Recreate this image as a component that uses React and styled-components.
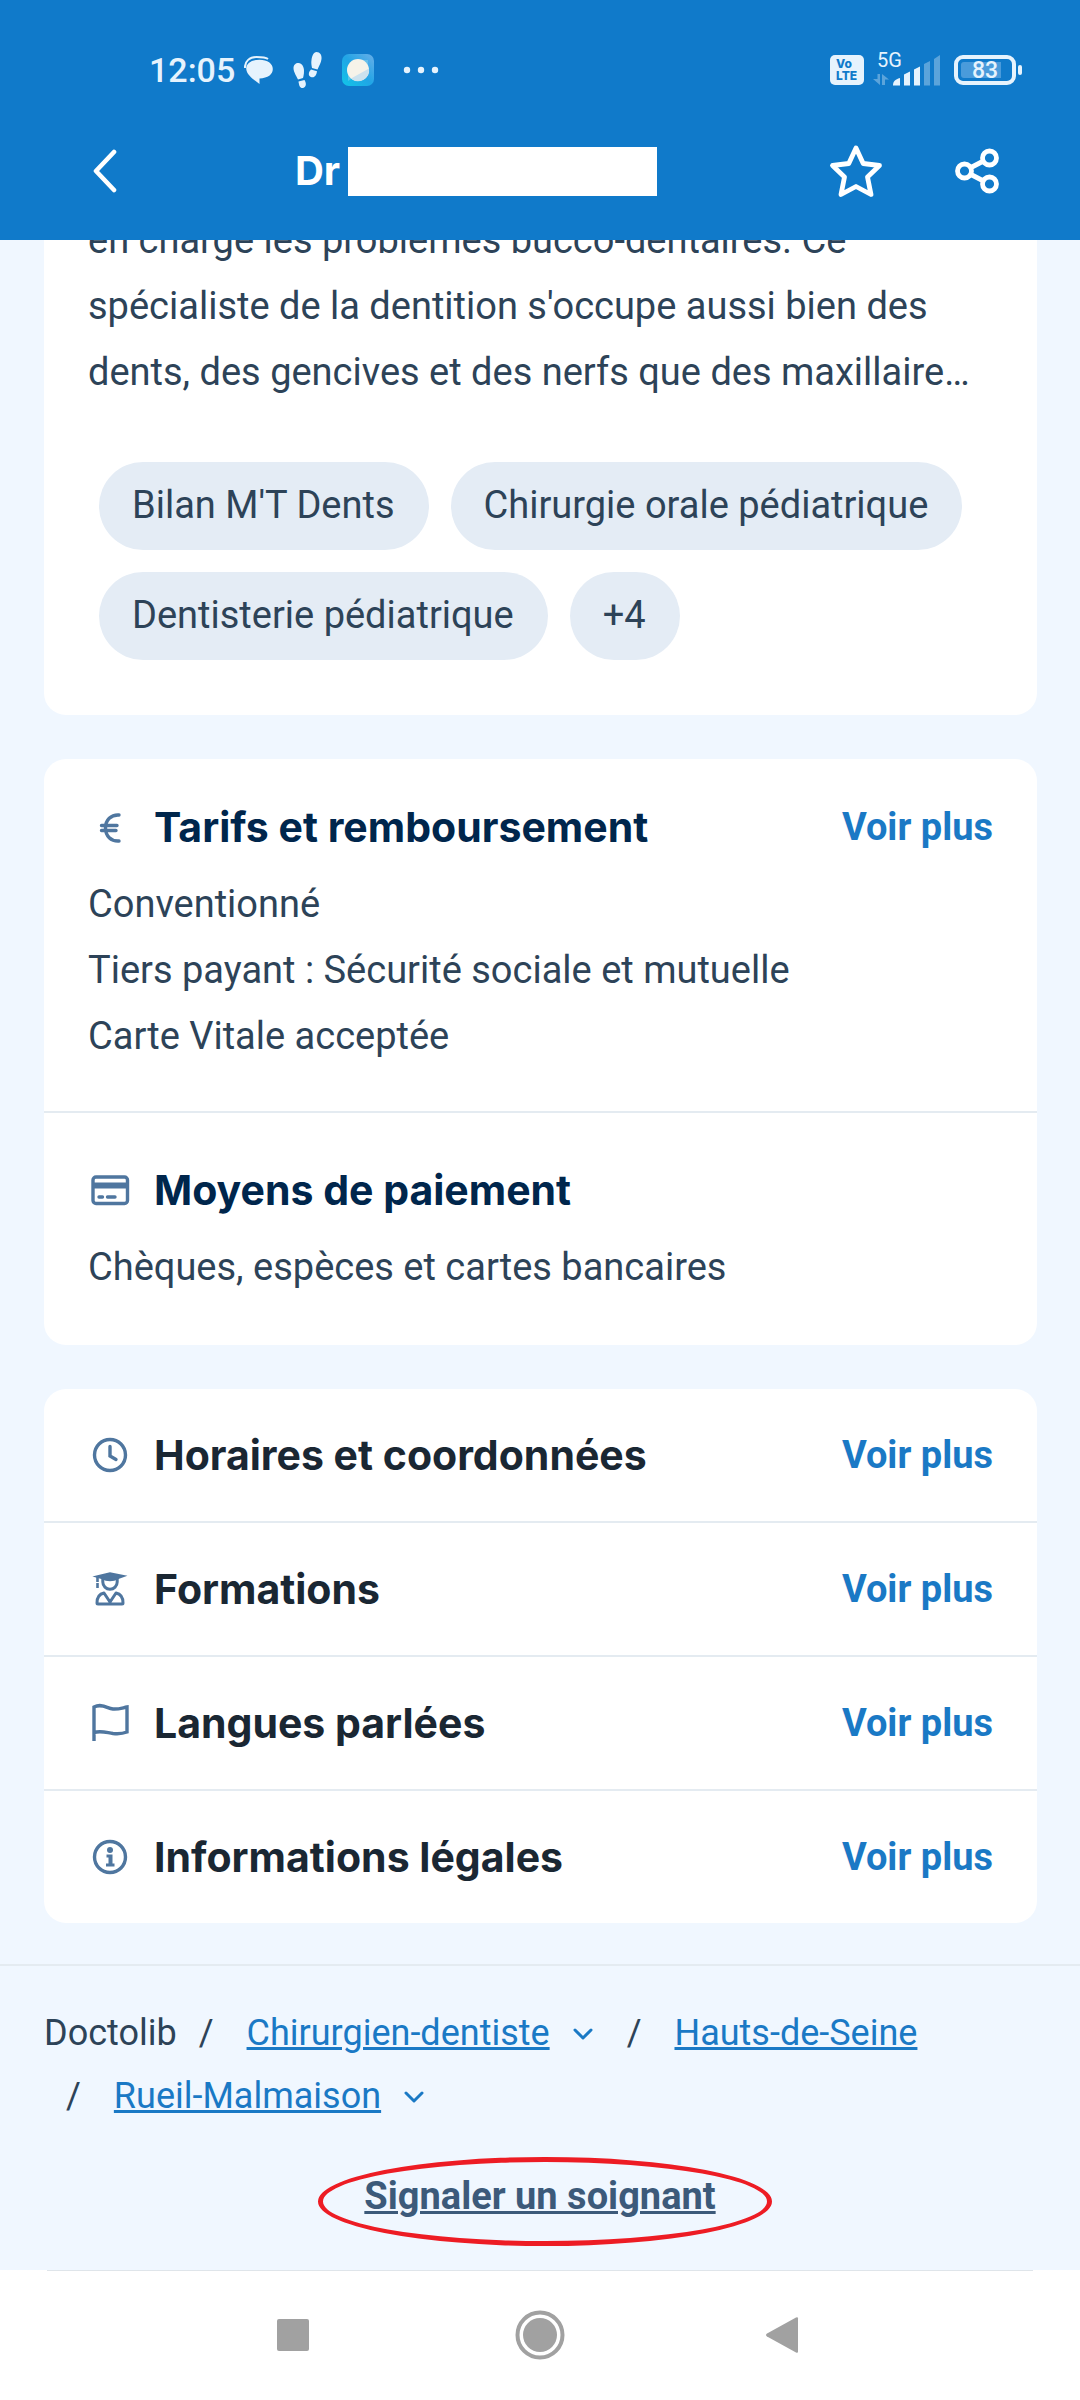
import React from "react";
import styled, { createGlobalStyle, ThemeProvider } from "styled-components";

const theme = {
  Colors: {
    Primary: "#107aca",
    White: "#ffffff",
    Page: "#f0f7ff",
    Status: "#e6f3fd",
    Text: "#2d4358",
    Navy: "#00264c",
    Dark: "#1a2733",
    Link: "#1a79c5",
    Icon: "#4f769f",
    Chip: "#e4ecf5",
    Line: "#e4ebf1",
    Report: "#3c5a7a",
    Mark: "#ed1c24",
    System: "#a1a1a1",
  },
  Fonts: {
    Body: `Roboto, "Liberation Sans", sans-serif`,
    Title: `Inter, "Open Sans", sans-serif`,
  },
};

const GlobalStyle = createGlobalStyle`
  * {
    box-sizing: border-box;
  }

  body {
    margin: 0;
    background: ${theme.Colors.Page};
    color: ${theme.Colors.Text};
    font-family: ${theme.Fonts.Body};
    font-size: 38px;
    line-height: 66px;
  }
`;

const Header = styled.header`
  position: sticky;
  top: 0;
  z-index: 1;
  background: ${(props) => props.theme.Colors.Primary};
  color: ${(props) => props.theme.Colors.White};
`;

const StatusBar = styled.div`
  display: flex;
  justify-content: space-between;
  height: 102px;
  padding: 38px 58px 0 149px;
  color: ${(props) => props.theme.Colors.Status};
`;

const StatusGroup = styled.div`
  display: flex;
  align-items: center;
  gap: ${(props) => props.$gap}px;
`;

const Clock = styled.time`
  font-size: 34px;
  font-weight: 500;
  line-height: 40px;
`;

const NoticeIcons = styled.div`
  display: flex;
  align-items: center;
  gap: 19px;
`;

const VoLte = styled.span`
  display: flex;
  flex-direction: column;
  justify-content: center;
  width: 34px;
  height: 30px;
  padding-left: 6px;
  border-radius: 5px;
  background: ${(props) => props.theme.Colors.Status};
  color: ${(props) => props.theme.Colors.Primary};
  font-family: ${(props) => props.theme.Fonts.Title};
  font-size: 12px;
  font-weight: 800;
  line-height: 12px;
`;

const Battery = styled.span`
  display: flex;
  align-items: center;
  gap: 2px;

  &::after {
    content: "";
    width: 4px;
    height: 10px;
    border-radius: 2px;
    background: ${(props) => props.theme.Colors.Status};
  }
`;

const BatteryBody = styled.span`
  width: 62px;
  height: 30px;
  padding: 3px;
  border: 4px solid ${(props) => props.theme.Colors.Status};
  border-radius: 9px;
`;

const BatteryLevel = styled.span`
  display: block;
  height: 16px;
  border-radius: 3px;
  background: linear-gradient(to right, #4a9bdb 83%, transparent 83%);
  font-size: 23px;
  font-weight: 500;
  line-height: 17px;
  text-align: center;
`;

const AppBar = styled.div`
  display: flex;
  align-items: center;
  height: 138px;
  padding: 0 67px 0 78px;
`;

const IconButton = styled.button`
  display: flex;
  justify-content: center;
  align-items: center;
  width: ${(props) => props.$width}px;
  height: 72px;
  padding: 0;
  border: 0;
  background: none;
  color: inherit;
`;

const AppTitle = styled.h1`
  flex: 1;
  display: flex;
  justify-content: center;
  align-items: center;
  gap: 8px;
  margin: 0;
  font-family: ${(props) => props.theme.Fonts.Title};
  font-size: 40px;
  font-weight: 700;
  line-height: 48px;
`;

const HiddenName = styled.span`
  width: 309px;
  height: 49px;
  background: ${(props) => props.theme.Colors.White};
`;

const AppActions = styled.div`
  display: flex;
  gap: 49px;
`;

const Cards = styled.main`
  display: flex;
  flex-direction: column;
  gap: 44px;
  margin-top: -33px;
  padding: 0 43px 41px 44px;
`;

const Card = styled.section`
  border-radius: 22px;
  background: ${(props) => props.theme.Colors.White};
`;

const About = styled(Card)`
  padding: 0 44px 55px;
`;

const AboutText = styled.p`
  margin: 0 0 57px;
`;

const Chips = styled.ul`
  display: flex;
  flex-wrap: wrap;
  gap: 22px;
  margin: 0;
  padding: 0 11px;
  list-style: none;
`;

const Chip = styled.li`
  padding: 10px 34px 12px 33px;
  border-radius: 44px;
  background: ${(props) => props.theme.Colors.Chip};
`;

const Section = styled.div`
  padding: ${(props) => (props.$divided ? "53px 44px 45px" : "44px 44px 42px")};
  border-top: ${(props) => (props.$divided ? `2px solid ${props.theme.Colors.Line}` : "0")};
`;

const HeadingRow = styled.div`
  display: flex;
  align-items: center;
  gap: 22px;
  height: 48px;
`;

const MenuRow = styled(HeadingRow)`
  height: 132px;
  padding: 0 44px;

  & + & {
    height: 134px;
    border-top: 2px solid ${(props) => props.theme.Colors.Line};
  }
`;

const Heading = styled.h2`
  flex: 1;
  margin: 0;
  color: ${(props) => props.theme.Colors[props.$color]};
  font-family: ${(props) => props.theme.Fonts.Title};
  font-size: 41px;
  font-weight: 700;
  line-height: 48px;
`;

const MoreLink = styled.a`
  color: ${(props) => props.theme.Colors.Link};
  font-weight: 700;
  line-height: 48px;
  text-decoration: none;
`;

const Lines = styled.div`
  margin-top: 20px;
`;

const Line = styled.p`
  margin: 0;
`;

const RowIcon = styled.svg`
  flex: none;
  width: 44px;
  height: 44px;
  fill: none;
  stroke: ${(props) => props.theme.Colors.Icon};
  stroke-width: 3.4;
`;

const Footer = styled.footer`
  display: flex;
  flex-direction: column;
  padding: 36px 44px 41px;
  border-top: 2px solid ${(props) => props.theme.Colors.Line};
`;

const Breadcrumb = styled.ol`
  display: flex;
  flex-wrap: wrap;
  margin: 0 0 35px;
  padding: 0;
  list-style: none;
  font-size: 36px;
  line-height: 63px;
`;

const Crumb = styled.li`
  display: flex;
  align-items: center;

  & + &::before {
    content: "/";
    padding: 0 33px 0 22px;
  }
`;

const CrumbLink = styled.a`
  color: ${(props) => props.theme.Colors.Link};
  text-decoration: underline;
  text-decoration-thickness: 3px;
`;

const CrumbArrow = styled.svg`
  width: 20px;
  height: 12px;
  margin: 0 12px 0 23px;
  fill: none;
  stroke: ${(props) => props.theme.Colors.Link};
  stroke-width: 3;
`;

const Report = styled.div`
  position: relative;
  align-self: center;
`;

const ReportLink = styled.a`
  color: ${(props) => props.theme.Colors.Report};
  font-weight: 700;
  text-decoration-thickness: 3px;
`;

const ReportMark = styled.span`
  position: absolute;
  inset: -6px -56px -17px -46px;
  border: 5px solid ${(props) => props.theme.Colors.Mark};
  border-radius: 50%;
  pointer-events: none;
`;

const SystemNav = styled.nav`
  display: flex;
  justify-content: center;
  align-items: center;
  gap: 193px;
  height: 130px;
  background:
    linear-gradient(#dfe5ea, #dfe5ea) top / calc(100% - 94px) 1px no-repeat,
    ${(props) => props.theme.Colors.White};
  color: ${(props) => props.theme.Colors.System};
`;

const icons = {
  euro: (
    <g strokeLinecap="round">
      <path d="M31 10c-8-.500-13.500 5-13.500 13S23 36.500 31 36" />
      <path d="M13.500 20.500H29M13.500 25.500H28" />
    </g>
  ),
  card: (
    <>
      <rect x="5" y="9" width="34.500" height="26.500" rx="3" />
      <path d="M5 17.500h34" strokeWidth="6" />
      <path d="M11 29h3.500M19.500 29H27" strokeLinecap="round" />
    </>
  ),
  clock: (
    <>
      <circle cx="22" cy="22" r="15.500" />
      <path d="M22 13.500V23l6 3.500" strokeLinecap="round" />
    </>
  ),
  graduate: (
    <>
      <path
        d="M7.500 9.500 22 6l14.500 3-7 2.500c-4 2.500-11 2.500-15 0z"
        fill="currentColor"
        strokeWidth="1.600"
      />
      <path d="M14.800 11v4a7.200 7.200 0 0 0 14.400 0v-4" strokeWidth="3" />
      <path d="M9.500 10v11" strokeWidth="2.600" strokeDasharray="5 1 5" />
      <path
        d="M22 35 16 26c-5 1-7 5-7 10 0 .700.300 1 1 1h24c.700 0 1-.300 1-1 0-5-2-9-7-10z"
        strokeWidth="3"
        strokeLinejoin="round"
      />
    </>
  ),
  flag: (
    <path d="M6 40V6c8-4 13 1.500 19 2 5 .500 9-1 14-2v25c-5 2-9 2-14 1.500-7-1-12-3-19-1" />
  ),
  info: (
    <>
      <circle cx="22" cy="22" r="15.500" />
      <circle cx="22" cy="15" r="3" fill="currentColor" stroke="none" />
      <path
        d="M18.500 19.500h6V28.500h2V31.500h-8.500v-3h2.500v-6h-2z"
        fill="currentColor"
        stroke="none"
      />
    </>
  ),
};

const Icon = ({ name }) => (
  <RowIcon viewBox="0 0 44 44" color={theme.Colors.Icon} aria-hidden="true">
    {icons[name]}
  </RowIcon>
);

const MessageIcon = () => (
  <svg width="30" height="30" viewBox="0 0 30 30" fill="currentColor">
    <path d="M15.500 4.700c8 0 13.300 3.800 13.300 9.300S24 23 15.500 23.500V29C11 25.500 2.200 20 2.200 13.500c0-5.200 5.300-8.800 13.300-8.800z" />
    <path
      d="M1 13C.500 6 6 2 12.500 2c5 0 9 .200 11.500 2"
      fill="none"
      stroke="currentColor"
      strokeWidth="2"
    />
  </svg>
);

const StepsIcon = () => (
  <svg width="30" height="38" viewBox="0 0 30 38" fill="currentColor">
    <path d="M5.500 12C9 12 11 16 11 20c0 3-.500 5-1 7l-5 1.500C2 23 .500 20 .500 17c0-3 2-5 5-5z" />
    <path d="M5.500 30.500 11.500 29c2 3 2 7-1.500 8-3 .500-4-2.500-4.500-6.500z" />
    <path d="M23.500 1C27 1 29 4 28.500 8c-.500 4-2 6-4 10.500L19 17c-.500-3-1-5-.500-8 .500-4 2-8 5-8z" />
    <path d="M18 18.500l6 1.700c-.500 4-2.500 6.500-5.500 6-3.500-.700-3.500-4.700-.500-7.700z" />
  </svg>
);

const WeatherIcon = () => (
  <svg width="32" height="32" viewBox="0 0 32 32">
    <defs>
      <linearGradient id="sky" x1="0" y1="1" x2="1" y2="0">
        <stop offset="0" stopColor="#12c6e8" />
        <stop offset="0.5" stopColor="#20a5e6" />
        <stop offset="1" stopColor="#69aee8" />
      </linearGradient>
    </defs>
    <rect width="32" height="32" rx="7" fill="url(#sky)" />
    <path d="M6 27V18L20 6h6v8z" fill="#7bcdef" opacity="0.6" />
    <circle cx="16" cy="16" r="11" fill="#f6f3e9" />
    <path d="M27 14.500A11 11 0 0 1 9 24.500z" fill="#cbe2ee" />
  </svg>
);

const DotsIcon = () => (
  <svg width="36" height="8" viewBox="0 0 36 8" fill="currentColor">
    <circle cx="4" cy="4" r="3.200" />
    <circle cx="18" cy="4" r="3.200" />
    <circle cx="32" cy="4" r="3.200" />
  </svg>
);

const SignalIcon = () => (
  <svg width="72" height="48" viewBox="-4 -6 72 48" fill="currentColor">
    <text x="4" y="15" fontSize="20" fontFamily="Roboto, sans-serif">
      5G
    </text>
    <path d="M20 33.500c0-4 2-6 7-7.500v7.500z" />
    <path d="M31 22.500l6-3v14h-6z" />
    <path d="M41 17.500l6-3v19h-6z" />
    <g opacity="0.35">
      <path d="M51 12l6-3v24.500h-6z" />
      <path d="M61 7l6-4v30.500h-6z" />
      <path d="M4.500 22h2.500v11L0 27h4.500zM9 22l7 5.500h-4v5.500H9z" />
    </g>
  </svg>
);

const BackIcon = () => (
  <svg width="28" height="44" viewBox="0 0 28 44" fill="none" stroke="currentColor" strokeWidth="4.600">
    <path d="M23 3 5 22l18 19" strokeLinecap="round" strokeLinejoin="round" />
  </svg>
);

const StarIcon = () => (
  <svg width="54" height="54" viewBox="0 0 54 54" fill="none" stroke="currentColor" strokeWidth="4.800">
    <path
      d="M27 4l7.200 15.500L50.500 21.500 38.500 33 42 50.500 27 42.500 12 50.500 15.500 33 3.500 21.500 19.800 19.500z"
      strokeLinejoin="round"
    />
  </svg>
);

const ShareIcon = () => (
  <svg width="46" height="46" viewBox="0 0 46 46" fill="none" stroke="currentColor" strokeWidth="4.800">
    <circle cx="10.500" cy="23" r="7" />
    <circle cx="35.500" cy="10" r="7" />
    <circle cx="35.500" cy="36" r="7" />
    <path d="M17 19.500l12.500-6.500M17 26.500l12.500 6.500" />
  </svg>
);

const chips = ["Bilan M'T Dents", "Chirurgie orale pédiatrique", "Dentisterie pédiatrique", "+4"];

const rows = [
  { icon: "clock", title: "Horaires et coordonnées" },
  { icon: "graduate", title: "Formations" },
  { icon: "flag", title: "Langues parlées" },
  { icon: "info", title: "Informations légales" },
];

const crumbs = [
  { name: "Doctolib" },
  { name: "Chirurgien-dentiste", link: "#dentiste", menu: true },
  { name: "Hauts-de-Seine", link: "#hauts-de-seine" },
  { name: "Rueil-Malmaison", link: "#rueil-malmaison", menu: true },
];

const App = () => (
  <ThemeProvider theme={theme}>
    <GlobalStyle />
    <Header>
      <StatusBar>
        <StatusGroup $gap={9}>
          <Clock>12:05</Clock>
          <NoticeIcons>
            <MessageIcon />
            <StepsIcon />
            <WeatherIcon />
          </NoticeIcons>
          <StatusGroup $gap={20}>
            <span />
            <DotsIcon />
          </StatusGroup>
        </StatusGroup>
        <StatusGroup $gap={13}>
          <StatusGroup $gap={5}>
            <VoLte>
              <span>Vo</span>
              <span>LTE</span>
            </VoLte>
            <SignalIcon />
          </StatusGroup>
          <Battery>
            <BatteryBody>
              <BatteryLevel>83</BatteryLevel>
            </BatteryBody>
          </Battery>
        </StatusGroup>
      </StatusBar>
      <AppBar>
        <IconButton $width={54} aria-label="Retour">
          <BackIcon />
        </IconButton>
        <AppTitle>
          Dr
          <HiddenName />
        </AppTitle>
        <AppActions>
          <IconButton $width={72} aria-label="Favori">
            <StarIcon />
          </IconButton>
          <IconButton $width={72} aria-label="Partager">
            <ShareIcon />
          </IconButton>
        </AppActions>
      </AppBar>
    </Header>

    <Cards>
      <About>
        <AboutText>
          en charge les problèmes bucco-dentaires. Ce spécialiste de la dentition
          s'occupe aussi bien des dents, des gencives et des nerfs que des
          maxillaire…
        </AboutText>
        <Chips>
          {chips.map((chip) => (
            <Chip key={chip}>{chip}</Chip>
          ))}
        </Chips>
      </About>

      <Card>
        <Section>
          <HeadingRow>
            <Icon name="euro" />
            <Heading $color="Navy">Tarifs et remboursement</Heading>
            <MoreLink href="#tarifs">Voir plus</MoreLink>
          </HeadingRow>
          <Lines>
            <Line>Conventionné</Line>
            <Line>Tiers payant : Sécurité sociale et mutuelle</Line>
            <Line>Carte Vitale acceptée</Line>
          </Lines>
        </Section>
        <Section $divided>
          <HeadingRow>
            <Icon name="card" />
            <Heading $color="Navy">Moyens de paiement</Heading>
          </HeadingRow>
          <Lines>
            <Line>Chèques, espèces et cartes bancaires</Line>
          </Lines>
        </Section>
      </Card>

      <Card>
        {rows.map((row) => (
          <MenuRow key={row.icon}>
            <Icon name={row.icon} />
            <Heading $color="Dark">{row.title}</Heading>
            <MoreLink href={`#${row.icon}`}>Voir plus</MoreLink>
          </MenuRow>
        ))}
      </Card>
    </Cards>

    <Footer>
      <Breadcrumb>
        {crumbs.map((crumb) => (
          <Crumb key={crumb.name}>
            {crumb.link ? <CrumbLink href={crumb.link}>{crumb.name}</CrumbLink> : crumb.name}
            {crumb.menu && (
              <CrumbArrow viewBox="0 0 20 12">
                <path d="M2 2l8 8 8-8" strokeLinecap="round" strokeLinejoin="round" />
              </CrumbArrow>
            )}
          </Crumb>
        ))}
      </Breadcrumb>
      <Report>
        <ReportLink href="#signaler">Signaler un soignant</ReportLink>
        <ReportMark />
      </Report>
    </Footer>

    <SystemNav>
      <IconButton $width={54} aria-label="Applications récentes">
        <svg width="34" height="34" viewBox="0 0 34 34" fill="currentColor">
          <rect x="1" y="1" width="32" height="32" rx="2" />
        </svg>
      </IconButton>
      <IconButton $width={54} aria-label="Accueil">
        <svg width="50" height="50" viewBox="0 0 50 50" fill="currentColor">
          <circle cx="25" cy="25" r="17" />
          <circle cx="25" cy="25" r="22.500" fill="none" stroke="currentColor" strokeWidth="4" />
        </svg>
      </IconButton>
      <IconButton $width={54} aria-label="Précédent">
        <svg width="44" height="38" viewBox="0 0 44 38" fill="currentColor">
          <path d="M31 1.500q2-1 2 1v33q0 2-2 1L2 20.500q-2-1.500 0-3z" />
        </svg>
      </IconButton>
    </SystemNav>
  </ThemeProvider>
);

export default App;
